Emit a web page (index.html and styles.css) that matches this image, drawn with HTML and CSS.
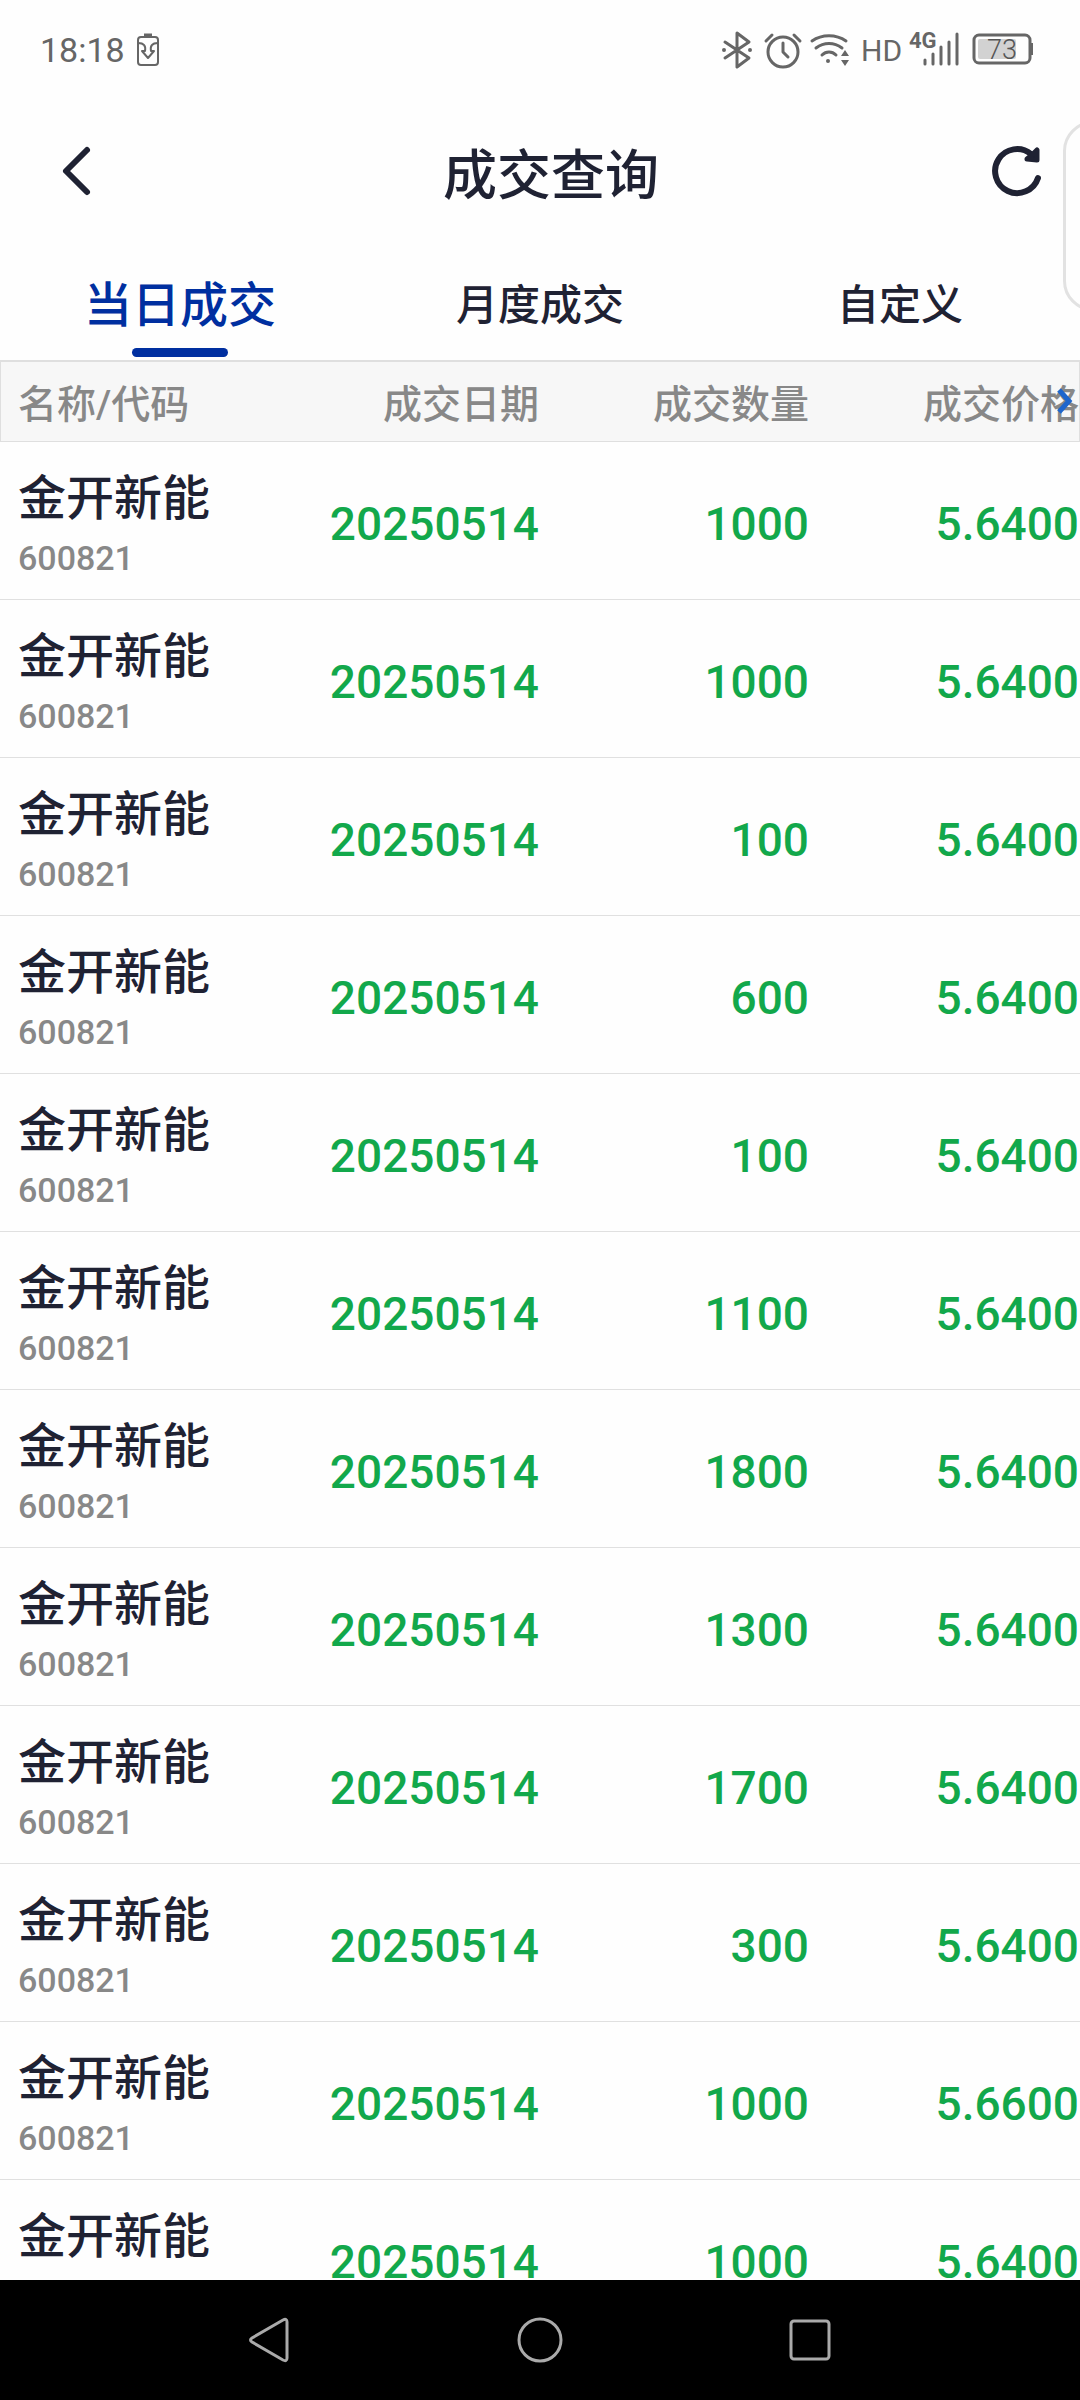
FILE: index.html
```html
<!DOCTYPE html>
<html lang="zh-CN">
<head>
  <meta charset="UTF-8">
  <meta name="viewport" content="width=device-width, initial-scale=1.0">
  <title>成交查询</title>
  <link rel="stylesheet" href="styles.css">
</head>
<body>
  <div class="status-bar">
    <div class="status-left">
      <span class="time">18:18</span>
      <svg width="22" height="34" viewBox="0 0 22 34" fill="none" stroke="#666" stroke-width="2">
        <rect x="1" y="4" width="20" height="28" rx="3"/>
        <path d="M7 2h8" stroke-width="3"/>
        <path d="M1 10c6 0 8 3 7 8H5l6 7 6-7h-3c-1-5 1-8 7-8" stroke-linejoin="round"/>
      </svg>
    </div>
    <div class="status-right">
      <svg width="36" height="40" viewBox="0 0 36 40" fill="none" stroke="#666" stroke-width="3" stroke-linejoin="round" stroke-linecap="round">
        <path d="M6 12l24 16-12 9V3l12 9L6 28"/>
        <circle cx="5" cy="20" r="1" stroke-width="2"/>
        <circle cx="31" cy="20" r="1" stroke-width="2"/>
      </svg>
      <svg width="38" height="40" viewBox="0 0 38 40" fill="none" stroke="#666" stroke-width="3" stroke-linecap="round" stroke-linejoin="round">
        <circle cx="20" cy="22" r="15"/>
        <path d="M20 13v9l5 5M3 11l6-6M37 11l-6-6"/>
      </svg>
      <svg width="44" height="40" viewBox="0 0 44 40" fill="none" stroke="#666" stroke-width="3" stroke-linecap="round">
        <path d="M3 11c10-7 24-7 34 0M7 18c8-6 18-6 26 0M13 25c4-4 10-4 14 0"/>
        <circle cx="19" cy="31" r="2" fill="#666" stroke="none"/>
        <path d="M36 20l4 6h-8zM36 36l4-6h-8z" fill="#666" stroke="none"/>
      </svg>
      <span class="hd">HD</span>
      <svg width="54" height="40" viewBox="0 0 54 40" fill="none" stroke="#666" stroke-width="3" stroke-linecap="round">
        <text class="net" x="0" y="18">4G</text>
        <path d="M16 30v4M24 24v10M32 17v17M40 12v22M48 4v30"/>
      </svg>
      <svg width="62" height="40" viewBox="0 0 62 40">
        <rect x="3" y="5" width="56" height="28" rx="5" fill="none" stroke="#666" stroke-width="3"/>
        <rect x="7" y="9" width="38" height="20" rx="2" fill="#d2d2d2"/>
        <path d="M60 13h2v12h-2z" fill="#666"/>
        <text class="level" x="31" y="29">73</text>
      </svg>
    </div>
  </div>

  <header class="header">
    <button class="back" aria-label="返回">
      <svg width="54" height="54" viewBox="0 0 54 54" fill="none" stroke="#1f2233" stroke-width="6" stroke-linecap="round" stroke-linejoin="round">
        <path d="M37 6L16 27l21 21"/>
      </svg>
    </button>
    <h1>成交查询</h1>
    <button class="refresh" aria-label="刷新">
      <svg width="54" height="54" viewBox="0 0 54 54" fill="none" stroke="#1f2233" stroke-width="6" stroke-linecap="round">
        <path d="M48 34A22 22 0 1 1 41 10"/>
        <path d="M47 6v10l-10-1 5-4z" stroke-width="5" stroke-linejoin="round" fill="#1f2233"/>
      </svg>
    </button>
  </header>
  <div class="side-handle"></div>

  <nav class="tabs">
    <button class="tab active">当日成交</button>
    <button class="tab">月度成交</button>
    <button class="tab">自定义</button>
  </nav>

  <main class="list">
    <svg class="more" width="16" height="26" viewBox="0 0 16 26" fill="none" stroke="#1f66cc" stroke-width="5">
      <path d="M2 2l10 11L2 24"/>
    </svg>
    <table>
      <thead>
        <tr><th>名称/代码</th><th>成交日期</th><th>成交数量</th><th>成交价格</th></tr>
      </thead>
      <tbody>
        <tr>
          <td><div class="name">金开新能</div><div class="code">600821</div></td>
          <td>20250514</td><td>1000</td><td>5.6400</td>
        </tr>
        <tr>
          <td><div class="name">金开新能</div><div class="code">600821</div></td>
          <td>20250514</td><td>1000</td><td>5.6400</td>
        </tr>
        <tr>
          <td><div class="name">金开新能</div><div class="code">600821</div></td>
          <td>20250514</td><td>100</td><td>5.6400</td>
        </tr>
        <tr>
          <td><div class="name">金开新能</div><div class="code">600821</div></td>
          <td>20250514</td><td>600</td><td>5.6400</td>
        </tr>
        <tr>
          <td><div class="name">金开新能</div><div class="code">600821</div></td>
          <td>20250514</td><td>100</td><td>5.6400</td>
        </tr>
        <tr>
          <td><div class="name">金开新能</div><div class="code">600821</div></td>
          <td>20250514</td><td>1100</td><td>5.6400</td>
        </tr>
        <tr>
          <td><div class="name">金开新能</div><div class="code">600821</div></td>
          <td>20250514</td><td>1800</td><td>5.6400</td>
        </tr>
        <tr>
          <td><div class="name">金开新能</div><div class="code">600821</div></td>
          <td>20250514</td><td>1300</td><td>5.6400</td>
        </tr>
        <tr>
          <td><div class="name">金开新能</div><div class="code">600821</div></td>
          <td>20250514</td><td>1700</td><td>5.6400</td>
        </tr>
        <tr>
          <td><div class="name">金开新能</div><div class="code">600821</div></td>
          <td>20250514</td><td>300</td><td>5.6400</td>
        </tr>
        <tr>
          <td><div class="name">金开新能</div><div class="code">600821</div></td>
          <td>20250514</td><td>1000</td><td>5.6600</td>
        </tr>
        <tr>
          <td><div class="name">金开新能</div><div class="code">600821</div></td>
          <td>20250514</td><td>1000</td><td>5.6400</td>
        </tr>
      </tbody>
    </table>
  </main>

  <!-- system navigation -->
  <footer class="nav-bar">
    <button aria-label="返回">
      <svg width="48" height="48" viewBox="0 0 48 48" fill="none" stroke="#aaa" stroke-width="3">
        <path d="M37 4q4-2 4 2v36q0 4-4 2L6 26q-3-2 0-4z"/>
      </svg>
    </button>
    <button aria-label="主页">
      <svg width="48" height="48" viewBox="0 0 48 48" fill="none" stroke="#aaa" stroke-width="3">
        <circle cx="24" cy="24" r="21"/>
      </svg>
    </button>
    <button aria-label="最近任务">
      <svg width="48" height="48" viewBox="0 0 48 48" fill="none" stroke="#aaa" stroke-width="3">
        <rect x="5" y="5" width="38" height="38" rx="3"/>
      </svg>
    </button>
  </footer>
</body>
</html>
```

FILE: styles.css
```css
* {
  box-sizing: border-box;
}

body {
  margin: 0;
  height: 100vh;
  display: flex;
  flex-direction: column;
  position: relative;
  overflow: hidden;
  background-color: #fefefe;
  color: #1f2233;
  font-family: Roboto, "Noto Sans CJK SC", sans-serif;
}

button {
  background: none;
  border: none;
  padding: 0;
  color: inherit;
  font-family: inherit;
  cursor: pointer;
}

svg {
  display: block;
  overflow: visible;
}

.status-bar {
  height: 100px;
  flex-shrink: 0;
  display: flex;
  justify-content: space-between;
  align-items: center;
  padding: 0 47px 0 40px;
  color: #666;
}

.status-left {
  display: flex;
  align-items: center;
  gap: 12px;
}

.time {
  font-size: 34px;
}

.status-right {
  display: flex;
  align-items: center;
  gap: 8px;
}

.hd {
  width: 40px;
  font-size: 30px;
}

.net {
  font-size: 22px;
  font-weight: bold;
  fill: #666;
  stroke: none;
}

.level {
  font-size: 27px;
  font-weight: 300;
  fill: #555;
  text-anchor: middle;
}

.header {
  height: 142px;
  flex-shrink: 0;
  display: flex;
  justify-content: space-between;
  align-items: center;
}

.header h1 {
  margin: 0;
  font-size: 54px;
  font-weight: 500;
}

.back {
  padding: 0 44px 0 50px;
}

.refresh {
  padding: 0 36px;
}

/* floating drawer handle, half outside the screen */
.side-handle {
  position: absolute;
  top: 121px;
  right: -43px;
  width: 60px;
  height: 190px;
  border: 3px solid #e2e2e2;
  border-radius: 30px;
  background-color: #fefefe;
}

.tabs {
  height: 118px;
  flex-shrink: 0;
  display: flex;
}

.tab {
  flex: 1;
  position: relative;
  font-size: 42px;
  font-weight: 500;
}

.tab.active {
  font-size: 48px;
  color: #002fa0;
}

.tab.active::after {
  content: "";
  position: absolute;
  left: 50%;
  bottom: 3px;
  width: 96px;
  height: 9px;
  margin-left: -48px;
  border-radius: 5px;
  background-color: #002fa0;
}

.list {
  flex: 1;
  min-height: 0;
  position: relative;
  overflow: hidden;
}

.more {
  position: absolute;
  top: 28px;
  right: 7px;
}

table {
  width: 100%;
  table-layout: fixed;
  border-collapse: separate;
  border-spacing: 0;
}

th {
  height: 82px;
  padding: 6px 1px 0 0;
  border-top: 2px solid #dfdfdf;
  border-bottom: 1px solid #dfdfdf;
  background-color: #f7f7f7;
  color: #888;
  font-size: 39px;
  font-weight: 500;
  line-height: 56px;
  text-align: right;
}

th:first-child {
  padding-left: 17px;
  border-left: 1px solid #dfdfdf;
  text-align: left;
}

th:last-child {
  padding-right: 0;
  border-right: 1px solid #dfdfdf;
}

td {
  height: 158px;
  padding: 6px 1px 0 0;
  border-bottom: 1px solid #e0e0e0;
  color: #12a84b;
  font-size: 46px;
  font-weight: 500;
  text-align: right;
}

td:first-child {
  padding: 6px 0 0 18px;
  text-align: left;
}

.name {
  color: #1f2233;
  font-size: 48px;
  line-height: 68px;
}

.code {
  color: #888;
  font-size: 34px;
  line-height: 50px;
}

.nav-bar {
  height: 120px;
  flex-shrink: 0;
  display: flex;
  justify-content: center;
  background-color: #000;
}

.nav-bar button {
  width: 25%;
  display: flex;
  justify-content: center;
  align-items: center;
}
```
